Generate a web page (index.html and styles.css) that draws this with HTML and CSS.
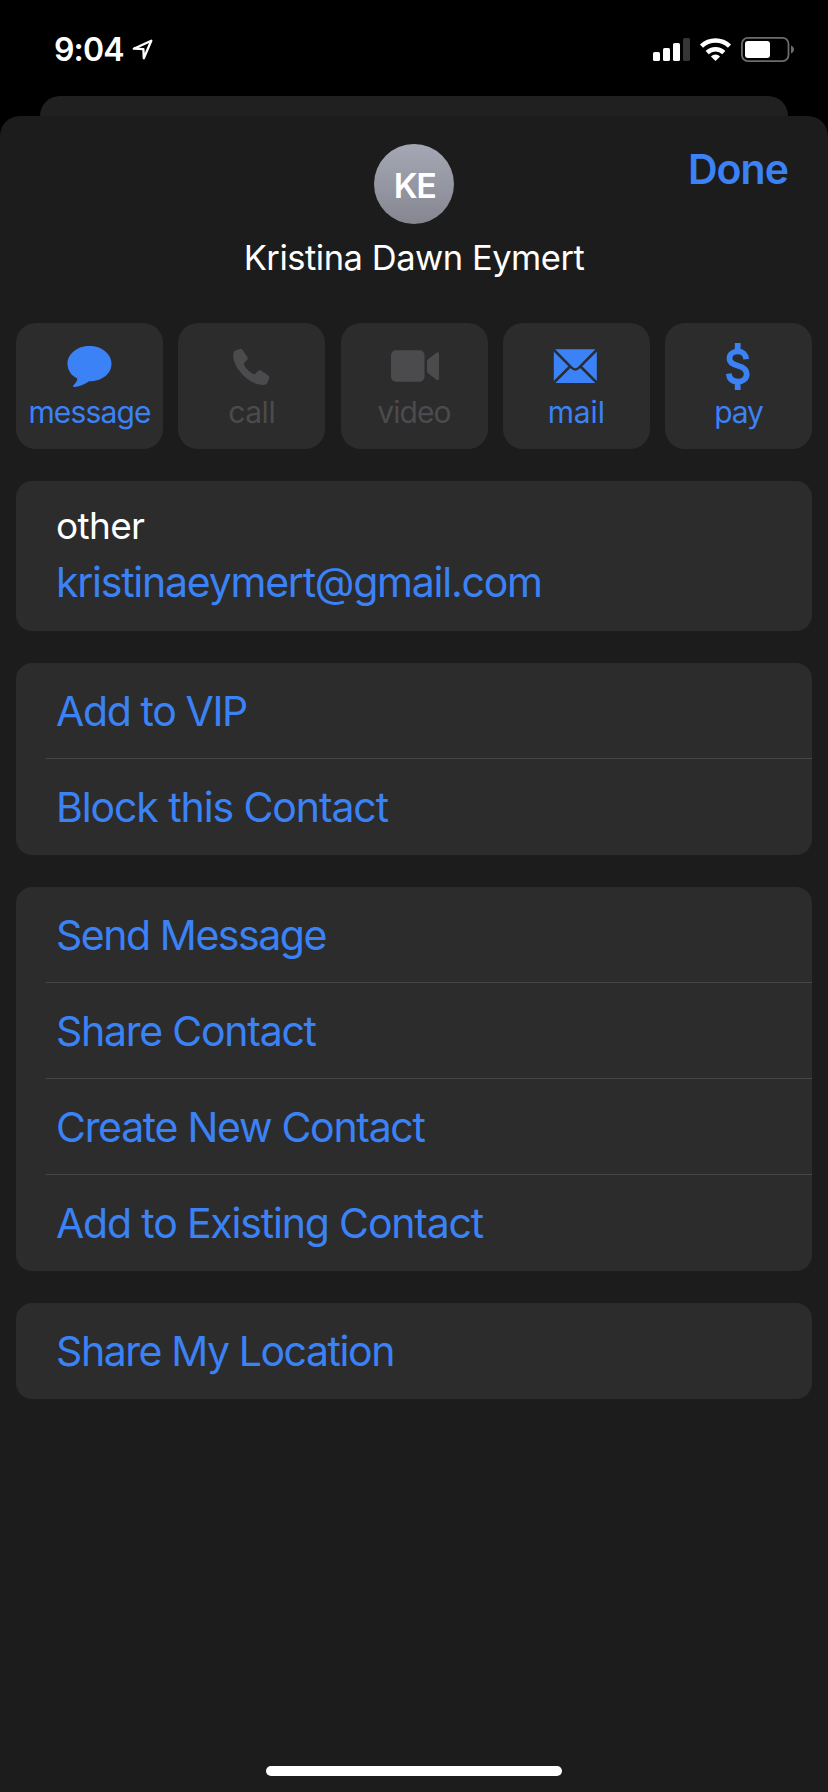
FILE: index.html
```html
<!DOCTYPE html>
<html lang="en">
<head>
<meta charset="utf-8">
<title>Kristina Dawn Eymert</title>
<link rel="stylesheet" href="styles.css">
</head>
<body>
<div class="screen">
  <div class="status-bar">
    <div class="status-left">
      <span class="time">9:04</span>
      <svg class="location" width="22" height="22" viewBox="0 0 22 22"><path d="M1.8 9.7 19.3 1.8 11.8 19.3 11.4 10.2Z" fill="none" stroke="#fff" stroke-width="2.3" stroke-linejoin="round"/></svg>
    </div>
    <svg class="status-icons" width="142" height="25" viewBox="0 0 142 25">
      <g fill="#fff">
        <rect x="0" y="15" width="7" height="9" rx="1.6"/>
        <rect x="10" y="11" width="7" height="13" rx="1.6"/>
        <rect x="20" y="6" width="7" height="18" rx="1.6"/>
        <rect x="30" y="1" width="7" height="23" rx="1.6" fill="#353535"/>
        <path d="M62.500 24 L57.900 19.400 A6.600 6.600 0 0 1 67.100 19.400Z"/>
      </g>
      <g fill="none" stroke="#fff" stroke-width="4.500">
        <path d="M54.200 15.700 A11.800 11.800 0 0 1 70.800 15.700"/>
        <path d="M48.500 9.200 A20.100 20.100 0 0 1 76.500 9.200"/>
      </g>
      <rect x="88.900" y="0.900" width="46.600" height="23.200" rx="6" fill="none" stroke="#6c6c6c" stroke-width="1.800"/>
      <rect x="92" y="4" width="25" height="17" rx="3" fill="#fff"/>
      <path d="M138 8.500c4 1.500 4 6.500 0 8Z" fill="#6c6c6c"/>
    </svg>
  </div>
  <div class="sheet-behind"></div>
  <main class="sheet">
    <header class="header">
      <div class="avatar"><span>KE</span></div>
      <a class="done">Done</a>
    </header>
    <h1 class="name">Kristina Dawn Eymert</h1>

    <div class="actions">
      <div class="action">
        <svg width="60" height="50" viewBox="0 0 60 50"><path d="M29.500 4C41.600 4 51.500 11.800 51.500 21.700S42.200 39.300 29 39.200C24.500 42.500 19 44.700 14.300 45.100C13.100 45.200 12.700 44.200 13.500 43.300C15.800 41.200 17.300 39 17.300 36.600C11 33.400 7.500 27.900 7.500 21.700C7.500 11.800 17.400 4 29.500 4Z" fill="currentColor"/></svg>
        <span class="l-message">message</span>
      </div>
      <div class="action disabled">
        <svg width="60" height="50" viewBox="0 0 60 50"><path d="M13.300 8.600L17.600 7.100C19 6.700 20.100 7.200 20.900 8.400L25.200 14.800C26 16.100 25.900 17.200 24.800 18.300L21.900 21.300C21.600 24.800 29.200 32.200 32.800 32.200L36 29.100C37.100 28.100 38.300 28 39.500 28.800L45.900 33.200C47.100 34.100 47.500 35.100 47.100 36.500L45.700 40.300C44.900 42 43.500 42.900 41 42.900C27.500 43.100 10.800 26 11.200 13C11.300 10.800 11.900 9.400 13.300 8.600Z" fill="currentColor"/></svg>
        <span class="l-call">call</span>
      </div>
      <div class="action disabled">
        <svg width="60" height="50" viewBox="0 0 60 50"><rect x="7" y="8.300" width="33.500" height="31.500" rx="5" fill="currentColor"/><path d="M43 19.200Q43 18.200 43.800 17.500L52 11Q55 9.300 55 12V36.500Q55 39.200 52 37.500L43.800 31Q43 30.300 43 29.300Z" fill="currentColor"/></svg>
        <span class="l-video">video</span>
      </div>
      <div class="action">
        <svg width="60" height="50" viewBox="0 0 60 50"><rect x="7.800" y="7.300" width="43" height="33.700" rx="2.500" fill="currentColor"/><path d="M7.500 7.500 25.500 25.500Q29.300 29.600 33.100 25.500L51.100 7.500M7.500 41 23.500 25M51.100 41 35.100 25" fill="none" stroke="#2c2c2c" stroke-width="2.500"/></svg>
        <span class="l-mail">mail</span>
      </div>
      <div class="action">
        <svg width="60" height="50" viewBox="0 0 60 50"><path d="M28.700 1V9M28.700 40V48M37.200 17.200C36.800 12.400 33.600 9.400 28.900 9.400C24 9.400 20.500 12.300 20.500 16.500C20.500 20.700 23.500 22.300 28.900 23.700C34.400 25.100 37.700 27.400 37.700 32C37.700 36.800 34 39.600 28.900 39.600C23.500 39.600 20.300 36.700 19.800 31.600" fill="none" stroke="currentColor" stroke-width="5.800"/></svg>
        <span class="l-pay">pay</span>
      </div>
    </div>

    <section class="card email">
      <div class="email-label">other</div>
      <a class="email-address">kristinaeymert@gmail.com</a>
    </section>

    <section class="card">
      <div class="row"><span class="t-vip">Add to VIP</span></div>
      <div class="row"><span class="t-block">Block this Contact</span></div>
    </section>

    <section class="card">
      <div class="row"><span class="t-send">Send Message</span></div>
      <div class="row"><span class="t-share">Share Contact</span></div>
      <div class="row"><span class="t-create">Create New Contact</span></div>
      <div class="row"><span class="t-existing">Add to Existing Contact</span></div>
    </section>

    <section class="card">
      <div class="row"><span class="t-location">Share My Location</span></div>
    </section>

    <div class="home-indicator"></div>
  </main>
</div>
</body>
</html>
```

FILE: styles.css
```css
* { box-sizing: border-box; }

body {
  margin: 0;
  background: #000;
  font-family: Inter, "Liberation Sans", sans-serif;
  color: #fff;
}

.screen {
  display: flex;
  flex-direction: column;
  width: 828px;
  height: 1792px;
  overflow: hidden;
}

/* Status bar */
.status-bar {
  display: flex;
  align-items: center;
  justify-content: space-between;
  height: 96px;
  padding: 3px 33px 0 54px;
}

.status-left {
  display: flex;
  align-items: center;
}

.time {
  font-size: 32px;
  line-height: 40px;
  font-weight: 600;
  letter-spacing: -0.85px;
}

.location { margin-left: 8px; }

/* Sheets */
.sheet-behind {
  height: 20px;
  margin: 0 40px;
  border-radius: 20px 20px 0 0;
  background: #202020;
}

.sheet {
  display: flex;
  flex: 1;
  flex-direction: column;
  padding: 28px 16px 16px;
  border-radius: 20px 20px 0 0;
  background: #1c1c1c;
}

.header {
  display: grid;
  grid-template-columns: 1fr 80px 1fr;
  align-items: start;
}

.avatar {
  display: flex;
  grid-column: 2;
  align-items: center;
  justify-content: center;
  width: 80px;
  height: 80px;
  padding: 3px 0 0 1px;
  border-radius: 50%;
  background: linear-gradient(#a5a8b4, #858690);
  font-size: 34px;
  font-weight: 600;
  letter-spacing: -1.6px;
}

.done {
  justify-self: end;
  margin-right: 24px;
  color: #3b82f6;
  font-size: 41px;
  line-height: 50px;
  font-weight: 600;
  letter-spacing: -0.95px;
}

.name {
  margin: 12px 0 43px;
  font-size: 34.5px;
  line-height: 44px;
  font-weight: 400;
  letter-spacing: -0.48px;
  text-align: center;
}

/* Quick actions */
.actions {
  display: grid;
  grid-template-columns: repeat(5, 147px);
  justify-content: space-between;
}

.action {
  display: flex;
  flex-direction: column;
  align-items: center;
  gap: 2px;
  height: 126px;
  padding-top: 19px;
  border-radius: 20px;
  background: #2c2c2c;
  color: #3b82f6;
  font-size: 30px;
  line-height: 36px;
}

.disabled { color: #4b4b4d; }

.l-message { letter-spacing: -0.86px; }
.l-call { letter-spacing: -0.5px; }
.l-video { letter-spacing: -0.92px; }
.l-mail { letter-spacing: -0.15px; }
.l-pay { letter-spacing: -1.2px; }

/* Cards */
.card {
  margin-top: 32px;
  border-radius: 16px;
  background: #2c2c2c;
}

.email {
  display: flex;
  flex-direction: column;
  gap: 9px;
  height: 150px;
  padding: 23px 40px 0;
}

.email-label {
  font-size: 37px;
  line-height: 44px;
  letter-spacing: -0.67px;
}

.email-address {
  color: #3b82f6;
  font-size: 41px;
  line-height: 50px;
  letter-spacing: -1.24px;
}

.row {
  display: flex;
  align-items: center;
  height: 96px;
  margin-left: 30px;
  padding-left: 10px;
  color: #3b82f6;
  font-size: 41px;
}

.row:not(:last-child) {
  box-shadow: inset 0 -1px #464648;
}

.t-vip { letter-spacing: -1.38px; }
.t-block { letter-spacing: -1.1px; }
.t-send { letter-spacing: -1.45px; }
.t-share { letter-spacing: -1.25px; }
.t-create { letter-spacing: -1.29px; }
.t-existing { letter-spacing: -1.18px; }
.t-location { letter-spacing: -1.43px; }

.home-indicator {
  width: 296px;
  height: 10px;
  margin: auto auto 0;
  border-radius: 5px;
  background: #fff;
}
```
